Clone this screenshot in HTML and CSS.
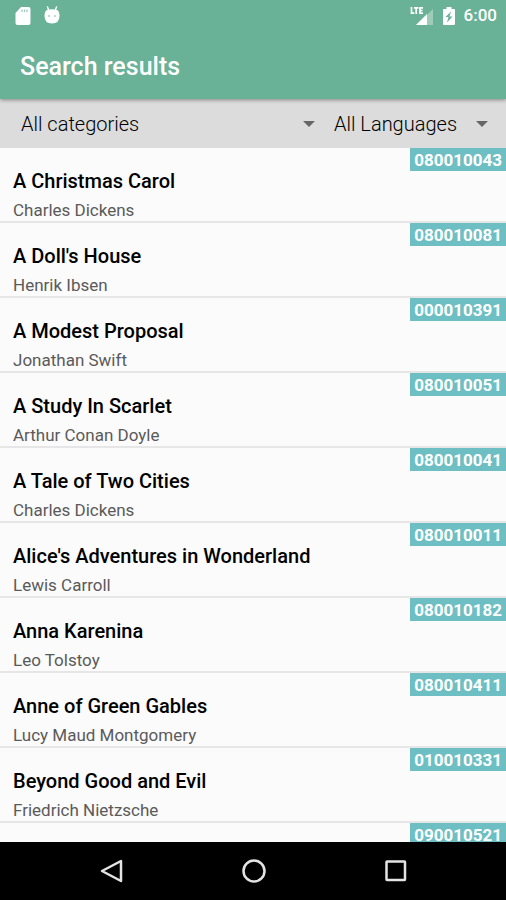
FILE: index.html
```html
<!DOCTYPE html>
<html lang="en">
<head>
<meta charset="utf-8">
<meta name="viewport" content="width=device-width, initial-scale=1">
<title>Search results</title>
<link rel="stylesheet" href="styles.css">
</head>
<body>
<header class="top">
  <div class="status">
    <svg class="sd" width="16" height="20" viewBox="0 0 16 20" aria-hidden="true"><path fill="#fff" d="M6 1h7.500q2 0 2 2v14q0 2-2 2H2.500q-2 0-2-2V7z"/><path stroke="#69b197" stroke-opacity=".7" stroke-width="1.200" d="M7 3.500v2.500M9.500 3.500v2.500M12 3.500v2.500"/></svg>
    <svg class="droid" width="16" height="20" viewBox="0 0 16 20" aria-hidden="true"><path stroke="#fff" stroke-width="1.500" stroke-linecap="round" d="M3.500 1l1.500 4M12.500 1L11 5"/><path fill="#fff" d="M3 4Q8 2.500 13 4q2.500 1 2.500 6 0 7.500-7.500 7.500T.5 10Q.5 5 3 4z"/><circle cx="5" cy="10" r=".8" fill="#69b197"/><circle cx="11" cy="10" r=".8" fill="#69b197"/></svg>
    <svg class="signal" width="24" height="20" viewBox="0 0 24 20" aria-hidden="true"><path fill="#fff" fill-opacity=".35" d="M23 3v16H6z"/><path fill="#fff" d="M17 8v11H6z"/><path fill="none" stroke="#fff" stroke-width="1.700" d="M1.500 1v6.200h2.800M4 1.800h4.500M6.200 1.800V8M13 1.800H10V7.200H13M10 4.500H12.500"/></svg>
    <svg class="battery" width="12" height="20" viewBox="0 0 12 20" aria-hidden="true"><path fill="#fff" d="M3.500 1h5v2H11q1 0 1 1v14q0 1-1 1H1q-1 0-1-1V4q0-1 1-1h2.500z"/><path fill="#69b197" d="M8 5.500L2.500 11H5.500L4 16.500 9.500 10.500H6.500z"/></svg>
    <span class="clock">6:00</span>
  </div>
  <h1 class="title">Search results</h1>
</header>
<form class="filters">
  <div class="filter filter-category">
    <select aria-label="Category"><option>All categories</option></select>
  </div>
  <div class="filter filter-language">
    <select aria-label="Language"><option>All Languages</option></select>
  </div>
</form>
<main class="results">
  <ul class="list">
    <li class="book"><div class="info"><h2>A Christmas Carol</h2><p>Charles Dickens</p></div><span class="code">080010043</span></li>
    <li class="book"><div class="info"><h2>A Doll's House</h2><p>Henrik Ibsen</p></div><span class="code">080010081</span></li>
    <li class="book"><div class="info"><h2>A Modest Proposal</h2><p>Jonathan Swift</p></div><span class="code">000010391</span></li>
    <li class="book"><div class="info"><h2>A Study In Scarlet</h2><p>Arthur Conan Doyle</p></div><span class="code">080010051</span></li>
    <li class="book"><div class="info"><h2>A Tale of Two Cities</h2><p>Charles Dickens</p></div><span class="code">080010041</span></li>
    <li class="book"><div class="info"><h2>Alice's Adventures in Wonderland</h2><p>Lewis Carroll</p></div><span class="code">080010011</span></li>
    <li class="book"><div class="info"><h2>Anna Karenina</h2><p>Leo Tolstoy</p></div><span class="code">080010182</span></li>
    <li class="book"><div class="info"><h2>Anne of Green Gables</h2><p>Lucy Maud Montgomery</p></div><span class="code">080010411</span></li>
    <li class="book"><div class="info"><h2>Beyond Good and Evil</h2><p>Friedrich Nietzsche</p></div><span class="code">010010331</span></li>
    <li class="book"><span class="code">090010521</span></li>
  </ul>
</main>
<nav class="navbar">
  <button type="button" aria-label="Back"><svg width="26" height="26" viewBox="0 0 26 26"><path d="M22 3v20L3 13z"/></svg></button>
  <button type="button" aria-label="Home"><svg width="26" height="26" viewBox="0 0 26 26"><circle cx="13" cy="13" r="10.500"/></svg></button>
  <button type="button" aria-label="Overview"><svg width="26" height="26" viewBox="0 0 26 26"><rect x="3.500" y="3.500" width="18.500" height="18.500" rx=".5"/></svg></button>
</nav>
</body>
</html>
```
FILE: styles.css
```css
* {
  box-sizing: border-box;
}

body {
  margin: 0;
  height: 100vh;
  display: flex;
  flex-direction: column;
  background: #fbfbfb;
  color: #000;
  font-family: Roboto, "Liberation Sans", sans-serif;
}

h1,
h2,
p,
ul {
  margin: 0;
  padding: 0;
}

.top {
  flex: none;
  position: relative;
  background: #69b197;
  color: #fff;
  box-shadow: 0 1px 4px rgba(0, 0, 0, 0.4);
}

.status {
  display: flex;
  align-items: center;
  height: 31px;
  padding: 0 9px 0 15px;
}

.droid {
  margin-left: 13px;
}

.signal {
  margin-left: auto;
}

.battery {
  margin: 0 9px;
}

.clock {
  font-size: 17px;
  font-weight: 500;
  line-height: 31px;
}

.title {
  padding: 20px 20px 16px;
  font-size: 25px;
  line-height: 32px;
  font-weight: 500;
}

.filters {
  flex: none;
  display: flex;
  height: 49px;
  background: #dcdcdc;
}

.filter {
  position: relative;
  display: flex;
}

.filter::after {
  content: "";
  position: absolute;
  right: 18px;
  top: 22px;
  border: 6px solid transparent;
  border-top-color: #666;
  border-bottom: 0;
  pointer-events: none;
}

.filter-category {
  flex: 1;
}

.filter-language {
  flex: none;
  width: 173px;
}

.filter select {
  appearance: none;
  width: 100%;
  border: 0;
  padding: 1px 40px 0 21px;
  background: transparent;
  color: #000;
  font: 300 20px Roboto, "Liberation Sans", sans-serif;
}

.filter-language select {
  padding-left: 1px;
}

.results {
  flex: 1;
  min-height: 0;
  overflow: hidden;
}

.list {
  list-style: none;
}

.book {
  display: flex;
  align-items: flex-start;
  height: 75px;
  border-bottom: 2px solid #e6e6e6;
}

.info {
  padding: 21px 0 0 13px;
}

.info h2 {
  font-size: 20px;
  line-height: 24px;
  font-weight: 500;
}

.info p {
  padding-top: 7px;
  font-size: 17px;
  line-height: 20px;
  font-weight: 400;
  color: #5a5a5a;
}

.code {
  margin-left: auto;
  padding: 1px 4px 0;
  background: #6ebfc3;
  color: #fff;
  font-size: 17px;
  line-height: 22px;
  font-weight: 700;
}

.navbar {
  flex: none;
  display: flex;
  height: 58px;
  padding: 0 39px 0 41px;
  background: #000;
}

.navbar button {
  flex: 1;
  display: flex;
  align-items: center;
  justify-content: center;
  border: 0;
  padding: 0;
  background: none;
}

.navbar svg {
  fill: none;
  stroke: #e4e4e4;
  stroke-width: 2.5;
  stroke-linejoin: round;
}
```
